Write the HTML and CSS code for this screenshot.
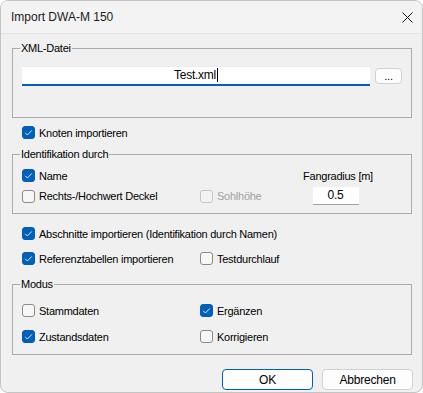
FILE: index.html
```html
<!DOCTYPE html>
<html lang="de">
<head>
<meta charset="UTF-8">
<title>Import DWA-M 150</title>
<link rel="stylesheet" href="styles.css">
</head>
<body>
<div class="window">
  <div class="titlebar">
    <span class="title">Import DWA-M 150</span>
    <svg class="close" width="11" height="11" viewBox="0 0 11 11">
      <path d="M0.5 0.5 L10.5 10.5 M10.5 0.5 L0.5 10.5" stroke="#1a1a1a" stroke-width="1" fill="none"/>
    </svg>
  </div>

  <div class="content">
    <fieldset class="group group-file">
      <legend>XML-Datei</legend>
      <div class="file-row">
        <div class="file-input">Test.xml<span class="caret"></span></div>
        <button class="btn btn-small">...</button>
      </div>
    </fieldset>

    <label class="check row-knoten">
      <span class="box checked"><svg viewBox="0 0 13 13"><path d="M3.2 6.8 L5.4 9 L9.8 4.4"/></svg></span>
      Knoten importieren
    </label>

    <fieldset class="group group-ident">
      <legend>Identifikation durch</legend>
      <div class="ident-grid">
        <label class="check">
          <span class="box checked"><svg viewBox="0 0 13 13"><path d="M3.2 6.8 L5.4 9 L9.8 4.4"/></svg></span>
          Name
        </label>
        <span></span>
        <span class="field-label">Fangradius [m]</span>
        <label class="check">
          <span class="box"></span>
          Rechts-/Hochwert Deckel
        </label>
        <label class="check disabled">
          <span class="box"></span>
          Sohlhöhe
        </label>
        <div class="field-wrap"><div class="num-field">0.5</div></div>
      </div>
    </fieldset>

    <label class="check row-abschnitte">
      <span class="box checked"><svg viewBox="0 0 13 13"><path d="M3.2 6.8 L5.4 9 L9.8 4.4"/></svg></span>
      Abschnitte importieren (Identifikation durch Namen)
    </label>

    <div class="two-col row-referenz">
      <label class="check">
        <span class="box checked"><svg viewBox="0 0 13 13"><path d="M3.2 6.8 L5.4 9 L9.8 4.4"/></svg></span>
        Referenztabellen importieren
      </label>
      <label class="check">
        <span class="box"></span>
        Testdurchlauf
      </label>
    </div>

    <fieldset class="group group-modus">
      <legend>Modus</legend>
      <div class="modus-grid">
        <label class="check">
          <span class="box"></span>
          Stammdaten
        </label>
        <label class="check">
          <span class="box checked"><svg viewBox="0 0 13 13"><path d="M3.2 6.8 L5.4 9 L9.8 4.4"/></svg></span>
          Ergänzen
        </label>
        <label class="check">
          <span class="box checked"><svg viewBox="0 0 13 13"><path d="M3.2 6.8 L5.4 9 L9.8 4.4"/></svg></span>
          Zustandsdaten
        </label>
        <label class="check">
          <span class="box"></span>
          Korrigieren
        </label>
      </div>
    </fieldset>

    <div class="buttons">
      <button class="btn btn-default">OK</button>
      <button class="btn">Abbrechen</button>
    </div>
  </div>
</div>
</body>
</html>
```

FILE: styles.css
```css
* {
  box-sizing: border-box;
}

body {
  margin: 0;
  background-color: #ffffff;
  font-family: "Liberation Sans", Arial, sans-serif;
  font-size: 11px;
  letter-spacing: -0.25px;
  color: #000000;
}

.window {
  width: 423px;
  height: 393px;
  border: 1px solid #c4c4c4;
  border-radius: 8px;
  background-color: #f0f0f0;
  overflow: hidden;
}

.titlebar {
  height: 33px;
  background-color: #f3f3f3;
  border-bottom: 1px solid #e3e3e3;
  display: flex;
  align-items: center;
  justify-content: space-between;
  padding: 0 9px 0 10px;
  letter-spacing: 0;
}

.title {
  font-family: "Liberation Sans", Arial, sans-serif;
  font-size: 12px;
  color: #1a1a1a;
}

.close {
  display: block;
}

.content {
  padding: 8px 10px 0 11px;
}

.group {
  margin: 0;
  border: 1px solid #ababab;
  padding: 0 9px;
  min-width: 0;
}

.group legend {
  font-size: 11px;
  line-height: 13px;
  padding: 0 1px;
  margin-left: -2px;
}

.group-file {
  padding-top: 11px;
  padding-bottom: 31px;
}

.file-row {
  display: flex;
  align-items: center;
  gap: 5px;
}

.file-input {
  width: 348px;
  height: 20px;
  background-color: #ffffff;
  border-top: 1px solid #ececec;
  border-bottom: 2px solid #005fb8;
  text-align: center;
  line-height: 17px;
  font-size: 12px;
}

.caret {
  display: inline-block;
  width: 1px;
  height: 14px;
  background-color: #000000;
  vertical-align: -3px;
  margin-left: 1px;
}

.btn {
  font-family: "Liberation Sans", Arial, sans-serif;
  font-size: 12px;
  letter-spacing: -0.2px;
  background-color: #fdfdfd;
  border: 1px solid #d0d0d0;
  border-radius: 4px;
  width: 91px;
  height: 21px;
  padding: 0;
  color: #000000;
}

.btn-small {
  width: 27px;
  height: 16px;
  font-size: 11px;
  line-height: 12px;
}

.btn-default {
  border-color: #005fb8;
}

.check {
  display: flex;
  align-items: center;
  gap: 4px;
  height: 13px;
  white-space: nowrap;
}

.box {
  width: 13px;
  height: 13px;
  flex: none;
  border: 1px solid #8a8a8a;
  border-radius: 3px;
  background-color: #f7f7f7;
}

.box svg {
  display: block;
  width: 13px;
  height: 13px;
  margin: -1px;
}

.box svg path {
  stroke: #d8e8f8;
  stroke-width: 1;
  fill: none;
}

.box.checked {
  border-color: #005fb8;
  background-color: #005fb8;
}

.check.disabled {
  color: #a0a0a0;
}

.check.disabled .box {
  border-color: #c6c6c6;
  background-color: #f3f3f3;
}

.row-knoten {
  margin: 8px 0 0 10px;
}

.group-ident {
  margin-top: 9px;
  padding-top: 8px;
  padding-bottom: 8px;
}

.ident-grid {
  display: grid;
  grid-template-columns: 178px 100px 76px;
  grid-template-rows: 13px 18px;
  row-gap: 5px;
  align-items: center;
}

.field-label {
  text-align: center;
  white-space: nowrap;
}

.field-wrap {
  display: flex;
  justify-content: center;
}

.num-field {
  width: 46px;
  height: 18px;
  background-color: #ffffff;
  border-bottom: 1px solid #a0a0a0;
  text-align: center;
  line-height: 17px;
  font-size: 12px;
  margin-left: -5px;
}

.row-abschnitte {
  margin: 13px 0 0 10px;
}

.two-col {
  display: grid;
  grid-template-columns: 178px auto;
}

.row-referenz {
  margin: 12px 0 0 10px;
}

.group-modus {
  margin-top: 13px;
  padding-top: 13px;
  padding-bottom: 11px;
}

.modus-grid {
  display: grid;
  grid-template-columns: 178px auto;
  row-gap: 13px;
}

.buttons {
  display: flex;
  justify-content: flex-end;
  gap: 9px;
  margin-top: 14px;
  margin-right: -1px;
}
```
